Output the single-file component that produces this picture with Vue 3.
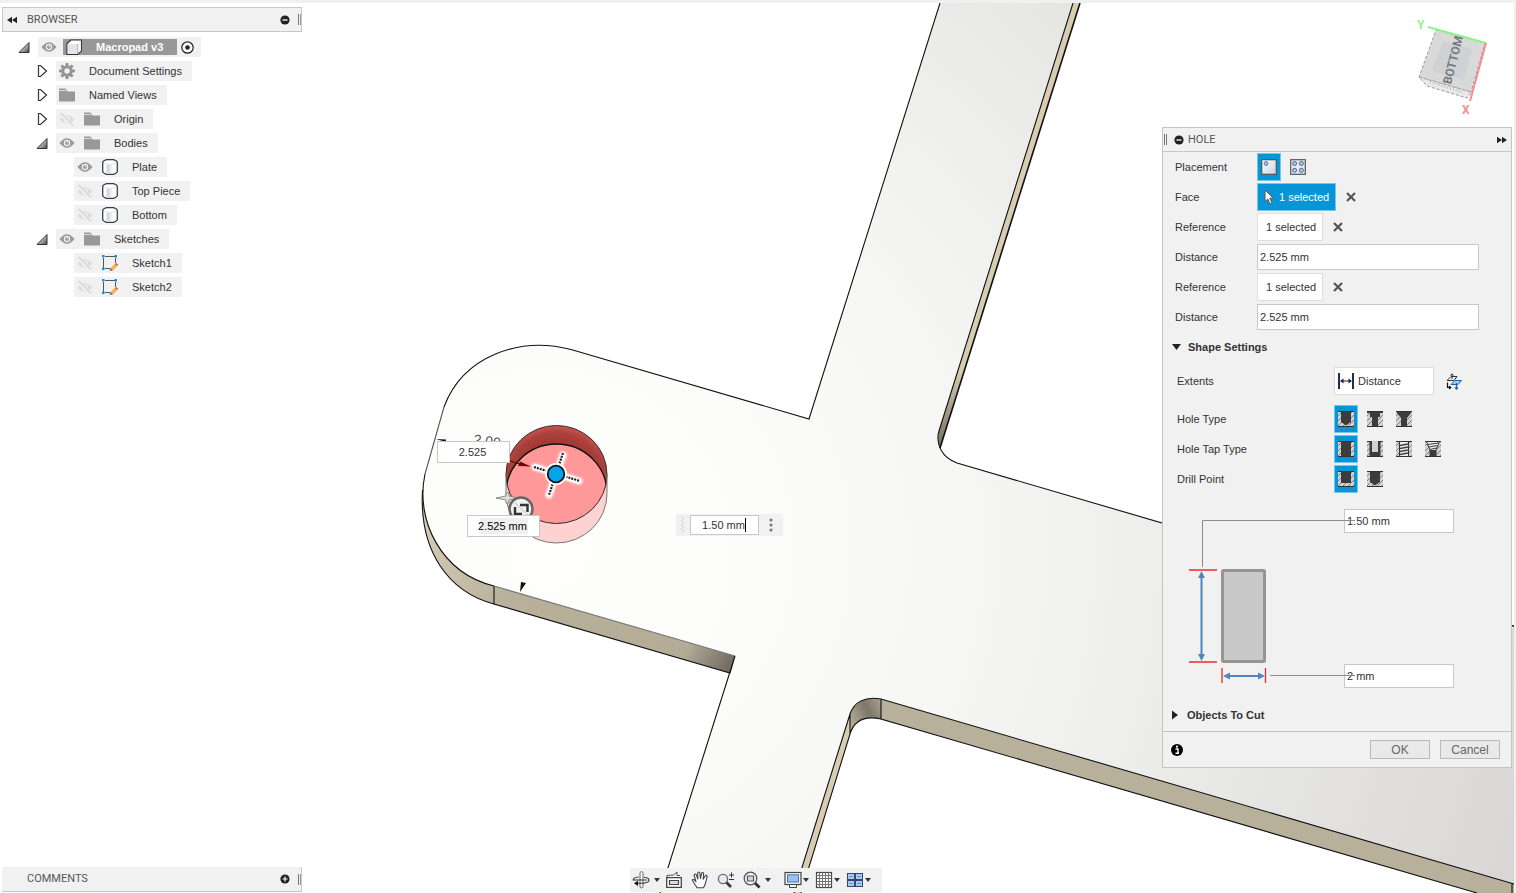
<script setup>
import { ref } from 'vue'

const tree = [
  { label: 'Macropad v3', level: 0, open: true, eye: 'on', icon: 'cube', root: true },
  { label: 'Document Settings', level: 1, open: false, eye: '', icon: 'gear' },
  { label: 'Named Views', level: 1, open: false, eye: '', icon: 'folder' },
  { label: 'Origin', level: 1, open: false, eye: 'off', icon: 'folder' },
  { label: 'Bodies', level: 1, open: true, eye: 'on', icon: 'folder' },
  { label: 'Plate', level: 2, eye: 'on', icon: 'body' },
  { label: 'Top Piece', level: 2, eye: 'off', icon: 'body' },
  { label: 'Bottom', level: 2, eye: 'off', icon: 'body' },
  { label: 'Sketches', level: 1, open: true, eye: 'on', icon: 'folder' },
  { label: 'Sketch1', level: 2, eye: 'off', icon: 'sketch' },
  { label: 'Sketch2', level: 2, eye: 'off', icon: 'sketch' }
]

const placement = ref('single')
const placements = ['single', 'multiple']

const shapeRows = ref([
  { label: 'Hole Type', value: 'simple', options: ['simple', 'counterbore', 'countersink'] },
  { label: 'Hole Tap Type', value: 'plain', options: ['plain', 'clearance', 'tapped', 'taper'] },
  { label: 'Drill Point', value: 'flat', options: ['flat', 'angle'] }
])

const navTools = [
  { icon: 'orbit', label: 'Orbit', menu: true, first: true },
  { icon: 'lookat', label: 'Look At' },
  { icon: 'hand', label: 'Pan' },
  { icon: 'zoom', label: 'Zoom' },
  { icon: 'fit', label: 'Fit', menu: true, last: true },
  { icon: 'display', label: 'Display Settings', menu: true, tight: true },
  { icon: 'grid', label: 'Grid and Snaps', menu: true, tight: true },
  { icon: 'views', label: 'Viewports', menu: true, tight: true }
]

const distanceA = ref('2.525 mm')
const distanceB = ref('2.525 mm')
const depth = ref('1.50 mm')
const diameter = ref('2 mm')
const extents = ref('Distance')
const offsetX = ref('2.525')
const offsetY = ref('2.525 mm')
</script>

<template>
  <div class="app">
    <svg class="defs" width="0" height="0" aria-hidden="true">
      <defs>
        <linearGradient id="gTri" x1="0" y1="0" x2="1" y2="1"><stop offset="0.2" stop-color="#fff" /><stop offset="1" stop-color="#444" /></linearGradient>
        <linearGradient id="gBody" x1="0" x2="1"><stop offset="0" stop-color="#c9ccd2" /><stop offset="1" stop-color="#fff" /></linearGradient>
        <linearGradient id="gPlate" x1="0" y1="0" x2="1" y2="1"><stop offset="0" stop-color="#fff" /><stop offset="1" stop-color="#cfd3da" /></linearGradient>
        <pattern id="hatch" width="5" height="5" patternUnits="userSpaceOnUse">
          <rect width="5" height="5" fill="#d2d2d2" />
          <path d="M-1 6L6 -1M-1 1L1 -1M4 6L6 4" stroke="#777" stroke-width="0.9" />
        </pattern>
      </defs>
      <symbol id="eye-on" viewBox="0 0 16 16">
        <path d="M0.5 8Q8 -1.5 15.5 8Q8 17.500 0.5 8Z" fill="#999" />
        <circle cx="8" cy="8" r="3.200" fill="#f1f1f1" /><circle cx="8" cy="8" r="2" fill="#999" /><circle cx="8.500" cy="7.300" r="0.800" fill="#f1f1f1" />
      </symbol>
      <symbol id="eye-off" viewBox="0 0 16 16">
        <path d="M0.500 8.500Q8 0 15.500 8.500Q8 16.500 0.500 8.500Z" fill="#dcdcdc" />
        <circle cx="8" cy="8.500" r="3" fill="#f1f1f1" /><circle cx="8" cy="8.500" r="1.800" fill="#dcdcdc" />
        <path d="M1.500 2.500L13.500 15" stroke="#f1f1f1" stroke-width="3.600" /><path d="M2 2L14 14.500" stroke="#d6d6d6" stroke-width="1.600" />
      </symbol>
      <symbol id="cube" viewBox="0 0 16 16">
        <path d="M1 4.500L5 1H15.500V11.500L11.500 15.500H1Z" fill="#fff" stroke="#333" stroke-width="1.200" stroke-linejoin="round" />
        <path d="M1.600 5H11V15H1.600Z" fill="#e3e5ea" /><path d="M11.500 5L15 1.500V11.300L11.500 15Z" fill="#f1f2f5" /><path d="M11.500 5V15" stroke="#b5b8bf" />
      </symbol>
      <symbol id="gear" viewBox="0 0 16 16">
        <g fill="#949494"><circle cx="8" cy="8" r="5.600" /><path d="M6.700 0H9.300L9.800 3.500H6.200ZM6.700 16H9.300L9.800 12.500H6.200ZM0 6.700V9.300L3.500 9.800V6.200ZM16 6.700V9.300L12.500 9.800V6.200ZM1.400 3.300L3.300 1.400L6 3.600L3.600 6ZM14.600 3.300L12.700 1.400L10 3.600L12.400 6ZM1.400 12.700L3.300 14.600L6 12.400L3.600 10ZM14.600 12.700L12.700 14.600L10 12.400L12.400 10Z" /></g>
        <circle cx="8" cy="8" r="2.700" fill="#f1f1f1" />
      </symbol>
      <symbol id="folder" viewBox="0 0 16 16">
        <path d="M0 1.500H6.500L8.500 4.500H16V14.500H0Z" fill="#989898" /><path d="M0 3.500H7" stroke="#dadada" />
      </symbol>
      <symbol id="body" viewBox="0 0 16 16">
        <path d="M0.700 3.500Q1 1.800 4.500 0.700H11.500Q15 1.800 15.300 3.500V12.500Q15 14.200 11.500 15.300H4.500Q1 14.200 0.700 12.500Z" fill="#fff" stroke="#3a3f50" stroke-width="1.300" />
        <path d="M4.500 5.500H11.500V13.800H4.500Z" fill="url(#gBody)" /><path d="M2 4.500Q8 6.500 14 4.500" stroke="#e4e4e8" fill="none" />
      </symbol>
      <symbol id="sketch" viewBox="0 0 16 16">
        <path d="M3 1.500H13M1.500 3V13M13.500 3V8M3 13.500H8" stroke="#555" fill="none" />
        <path d="M0 0H2.500V2.500H0ZM12.500 0H15V2.500H12.500ZM0 12.500H2.500V15H0Z" fill="#1292dd" />
        <path d="M8.500 13L13 8.500L15.500 11L11 15.500Z" fill="#f5b64a" /><path d="M13 9L14.500 8L16 9.500L15 11Z" fill="#f0484d" /><path d="M8.500 12.800L11 15.500L7.500 16Z" fill="#777" />
      </symbol>
      <symbol id="minus" viewBox="0 0 10 10"><circle cx="5" cy="5" r="4.600" fill="#222" /><path d="M2.500 5H7.500" stroke="#fff" stroke-width="1.300" /></symbol>
      <symbol id="plus" viewBox="0 0 10 10"><circle cx="5" cy="5" r="4.600" fill="#222" /><path d="M2.500 5H7.500M5 2.500V7.500" stroke="#fff" stroke-width="1.200" /></symbol>
      <symbol id="rewind" viewBox="0 0 10 8"><path d="M5 0.800V7.200L0 4ZM10 0.800V7.200L5 4Z" fill="#222" /></symbol>
      <symbol id="forward" viewBox="0 0 10 8"><path d="M0 0.800V7.200L5 4ZM5 0.800V7.200L10 4Z" fill="#222" /></symbol>
      <symbol id="cross" viewBox="0 0 10 10"><path d="M1 1L9 9M9 1L1 9" stroke="#555" stroke-width="2.200" /></symbol>
      <symbol id="single" viewBox="0 0 16 16"><rect x="0.700" y="0.700" width="14.600" height="14.600" fill="url(#gPlate)" stroke="#555" stroke-width="1.200" /><circle cx="5" cy="4.500" r="1.900" fill="#a9c8ea" stroke="#48698f" stroke-width="0.900" /></symbol>
      <symbol id="multiple" viewBox="0 0 16 16"><rect x="0.700" y="0.700" width="14.600" height="14.600" fill="#e8eaee" stroke="#555" stroke-width="1.200" /><g fill="#a9c8ea" stroke="#48698f"><circle cx="4.600" cy="4.500" r="2" /><circle cx="11.400" cy="4.500" r="2" /><circle cx="4.600" cy="11.300" r="2" /><circle cx="11.400" cy="11.300" r="2" /></g></symbol>
      <symbol id="simple" viewBox="0 0 16 16"><rect width="16" height="16" fill="url(#hatch)" /><path d="M3 0H13V11L8 14.500L3 11Z" fill="#3c3c3c" /><path d="M0 0.500H16M0 15.500H16" stroke="#333" /></symbol>
      <symbol id="counterbore" viewBox="0 0 16 16"><rect width="16" height="16" fill="url(#hatch)" /><path d="M0 0H16V2H13V6H11V16H5V6H3V2H0Z" fill="#3c3c3c" /><path d="M0 0.500H16M0 15.500H16" stroke="#333" /></symbol>
      <symbol id="countersink" viewBox="0 0 16 16"><rect width="16" height="16" fill="url(#hatch)" /><path d="M0 0H16L15 2L11 7V16H5V7L1 2Z" fill="#3c3c3c" /><path d="M0 0.500H16M0 15.500H16" stroke="#333" /></symbol>
      <symbol id="plain" viewBox="0 0 16 16"><rect width="16" height="16" fill="url(#hatch)" /><path d="M3 0H13V16H3Z" fill="#3c3c3c" /><path d="M0 0.500H16M0 15.500H16" stroke="#333" /></symbol>
      <symbol id="clearance" viewBox="0 0 16 16"><rect width="16" height="16" fill="url(#hatch)" /><path d="M2.500 0H13.500V16H2.500Z" fill="#3c3c3c" /><path d="M5 0H11V11H5Z" fill="#d0d0d0" /><path d="M0 15.500H16M0 0.500H4M12 0.500H16" stroke="#333" /></symbol>
      <symbol id="tapped" viewBox="0 0 16 16"><rect width="16" height="16" fill="url(#hatch)" /><path d="M3.500 0H12.500V16H3.500Z" fill="#eee" stroke="#333" /><path d="M4 4.500L12 3M4 7.500L12 6M4 10.500L12 9M4 13.500L12 12" stroke="#444" stroke-width="1.300" /><path d="M0 0.500H16M0 15.500H16" stroke="#333" /></symbol>
      <symbol id="taper" viewBox="0 0 16 16"><rect width="16" height="16" fill="url(#hatch)" /><path d="M1.500 0.500H14.500L11 9V15.500H5V9Z" fill="#eee" stroke="#333" /><path d="M5 9H11V16H5Z" fill="#3c3c3c" /><path d="M3 3.500L13.500 2M4 6L12.500 4.500M5 8.500L11.500 7" stroke="#444" stroke-width="1.200" /><path d="M0 0.500H16M0 15.500H16" stroke="#333" /></symbol>
      <symbol id="flat" viewBox="0 0 16 16"><rect width="16" height="16" fill="url(#hatch)" /><path d="M3 0H13V12H3Z" fill="#3c3c3c" /><path d="M0 0.500H4M12 0.500H16M0 15.500H16" stroke="#333" /></symbol>
      <symbol id="angle" viewBox="0 0 16 16"><rect width="16" height="16" fill="url(#hatch)" /><path d="M3 0H13V11L8 14.500L3 11Z" fill="#3c3c3c" /><path d="M0 0.500H16M0 15.500H16" stroke="#333" /></symbol>
      <symbol id="orbit" viewBox="0 0 18 18"><path d="M8 1.500L9.500 0.500L11 1.500V16L9.500 17L8 16Z" fill="#fff" stroke="#555" stroke-width="0.900" /><path d="M6.500 6C3 6.300 1.200 7.500 1.200 9H15M12 6.200C15 6.500 17 7.500 17 9C17 11 13 12.200 9 12.200H5" stroke="#333" stroke-width="1.100" fill="none" /><path d="M2 12.300L6 9.800V15Z" fill="#111" /></symbol>
      <symbol id="lookat" viewBox="0 0 18 18"><path d="M2 6V4.500L8.500 4L12 1V4.500H15" stroke="#555" fill="none" /><path d="M1.700 6.700H16.300V16.300H1.700Z" fill="#fff" stroke="#444" stroke-width="1.300" /><path d="M4.500 9.500H13.500V13.500H4.500Z" fill="#d9dde2" stroke="#444" stroke-width="1.200" /></symbol>
      <symbol id="hand" viewBox="0 0 18 18"><path d="M6 16.800C5 14 2 11.500 1.300 9.200C1.500 8 3 8.300 5 10.700L3.200 4.500C3 2.800 5 2.500 5.500 4.200L6.800 8L6.700 2.300C6.800 0.600 8.700 0.600 8.900 2.300L9.400 7.500L10.600 2.500C11 1 12.800 1.400 12.600 3L12.200 8.200L14.200 5C15 3.700 16.700 4.500 16.100 6C15 9 15 13 12.500 16.800Z" fill="#fff" stroke="#444" stroke-width="1.100" stroke-linejoin="round" /></symbol>
      <symbol id="zoom" viewBox="0 0 18 18"><circle cx="6" cy="8" r="4.600" fill="#e4edee" stroke="#667" stroke-width="1.300" /><path d="M9.500 11.500L14 16" stroke="#334" stroke-width="2.600" /><path d="M12 4H17M14.500 1.500V6.500M12 8.500H17" stroke="#333" /></symbol>
      <symbol id="fit" viewBox="0 0 18 18"><circle cx="7.500" cy="7.500" r="6.300" fill="#edf2f2" stroke="#555" stroke-width="1.300" /><path d="M4.500 5H10.500V10H4.500Z" fill="#cfd9dc" stroke="#555" stroke-width="1.200" /><path d="M12 12L16.500 16.500" stroke="#333" stroke-width="2.800" /></symbol>
      <symbol id="display" viewBox="0 0 18 18"><rect x="1" y="1.500" width="16" height="12" fill="#f4f6f8" stroke="#444" stroke-width="1.200" /><rect x="3.500" y="3.800" width="11" height="7.200" fill="#9cc0ea" stroke="#4a76ad" /><path d="M5.500 14V16.500H12.500V14" fill="#fff" stroke="#444" /></symbol>
      <symbol id="grid" viewBox="0 0 18 18"><rect x="1.500" y="1.500" width="15" height="15" fill="#fff" stroke="#444" stroke-width="1.200" /><path d="M4.500 1V17M7.500 1V17M10.500 1V17M13.500 1V17M1 4.500H17M1 7.500H17M1 10.500H17M1 13.500H17" stroke="#666" stroke-width="0.900" /></symbol>
      <symbol id="views" viewBox="0 0 18 18"><g fill="#aac9ef" stroke="#2e4a73"><rect x="1.500" y="2.500" width="7" height="6" /><rect x="9.500" y="2.500" width="7" height="6" /><rect x="1.500" y="9.500" width="7" height="6" /><rect x="9.500" y="9.500" width="7" height="6" /></g><path d="M3.500 5.500H6.500M11.500 5.500H14.500M3.500 12.500H6.500M11.500 12.500H14.500" stroke="#5f8cc8" /></symbol>
    </svg>

    <svg class="scene" viewBox="0 0 1516 893" preserveAspectRatio="xMinYMin slice" role="img" aria-label="Macropad plate model">
      <defs>
        <radialGradient id="face" gradientUnits="userSpaceOnUse" cx="550" cy="550" r="1050">
          <stop offset="0" stop-color="#fefefd" /><stop offset="0.180" stop-color="#fcfcfb" /><stop offset="0.400" stop-color="#f6f6f5" /><stop offset="0.620" stop-color="#ebebea" /><stop offset="1" stop-color="#d6d5d3" />
        </radialGradient>
        <linearGradient id="edge" gradientUnits="userSpaceOnUse" x1="422" y1="500" x2="735" y2="670">
          <stop offset="0" stop-color="#d8d0bb" /><stop offset="0.350" stop-color="#b9b09c" /><stop offset="0.850" stop-color="#b5ac98" /><stop offset="1" stop-color="#69645a" />
        </linearGradient>
        <linearGradient id="arm" gradientUnits="userSpaceOnUse" x1="0" y1="370" x2="0" y2="448"><stop offset="0" stop-color="#d8ccb3" /><stop offset="1" stop-color="#756d60" /></linearGradient>
        <linearGradient id="fillet" gradientUnits="userSpaceOnUse" x1="850" y1="725" x2="890" y2="705"><stop offset="0" stop-color="#b9b09d" /><stop offset="0.500" stop-color="#7d766a" /><stop offset="1" stop-color="#b9b09c" /></linearGradient>
        <radialGradient id="wall" gradientUnits="userSpaceOnUse" cx="556" cy="485" r="62"><stop offset="0.600" stop-color="#993530" /><stop offset="0.850" stop-color="#ad413c" /><stop offset="1" stop-color="#d55f5a" /></radialGradient>
        <clipPath id="rim"><ellipse cx="556.500" cy="474.500" rx="50.500" ry="49" /></clipPath>
        <filter id="soft" x="-30%" y="-30%" width="160%" height="160%"><feGaussianBlur stdDeviation="1.200" /></filter>
      </defs>
      <rect width="1516" height="893" fill="#fff" />
      <path fill="url(#face)" d="M940 3L809 419L571 349.500C520 336 463 356 444 407L425 474C415 520 441 573 494 586L735 656L660 893H795L850 714C854 702 865 696 881 699L1514 884V626L955 462C941 456 936 444 939 431L1073 3Z" />
      <path fill="url(#edge)" d="M422.500 490C424 538 452 576 494 586L735 656L730 673L494 604C449 592 419 552 422.500 490Z" />
      <path fill="#b9b09c" d="M881 699L1514 884V893H1477L881 719Z" />
      <path fill="url(#fillet)" d="M850 714C854 702 865 696 881 699V719C863 715 854 721 850 734Z" />
      <path fill="#d8ccb3" d="M850 714V734L801 893H794Z" />
      <path fill="url(#arm)" d="M1073 3H1080L940 448Q937 438 939 431Z" />
      <g fill="none" stroke="#111" stroke-width="1.100">
        <path d="M940 3L809 419L571 349.500C520 336 463 356 444 407" />
        <path d="M444 407L425 474" stroke="#555" />
        <path d="M425 474C415 520 441 573 494 586" />
        <path d="M494 586L735 656" stroke="#777" />
        <path d="M735 656L660 893M735 656L730 673L494 604V586M494 604C449 592 419 552 422.500 490" />
        <path d="M794 893L850 714C854 702 865 696 881 699L1514 884M1477 893L881 719V699M881 719C863 715 854 721 850 734V714M850 734L801 893M1512 884V893" />
        <path d="M1073 3L939 431Q936 440 941 450Q946 459 957 463L1514 626" />
        <path d="M1080 3L940 448" stroke-width="1.600" />
      </g>
      <text x="473" y="444" class="dim" transform="rotate(8 473 444)">2.00</text>
      <ellipse cx="556.500" cy="493.500" rx="50.500" ry="49.500" fill="#ffd2d2" />
      <path d="M506 474H607V494H506Z" fill="#ffd2d2" />
      <ellipse cx="556.500" cy="474.500" rx="50.500" ry="49" fill="url(#wall)" />
      <ellipse cx="556.500" cy="493.500" rx="50.500" ry="49.500" fill="#f99" clip-path="url(#rim)" />
      <g fill="none" stroke="#333">
        <ellipse cx="556.500" cy="474.500" rx="50.500" ry="49" />
        <path d="M506 474V493.500A50.500 49.500 0 0 0 607 493.500V474" stroke="#777" />
        <ellipse cx="556.500" cy="493.500" rx="50.500" ry="49.500" stroke="#111" stroke-width="1.400" clip-path="url(#rim)" />
      </g>
      <path d="M510 461L521 464.500" stroke="#600" stroke-width="1.200" /><path d="M520 461.500L531 466.500L518 466Z" fill="#700" />
      <g stroke="#fff" stroke-linecap="round" filter="url(#soft)"><path d="M563 455L549 495M535 467L579 481" stroke-width="7" /></g>
      <g stroke="#fff" stroke-linecap="round"><path d="M563 455L549 494M535 467L578 481" stroke-width="5" /></g>
      <path d="M563 453L549 495M534 467L580 481" stroke="#222" stroke-width="2.200" stroke-dasharray="2 1" />
      <circle cx="556" cy="474" r="11" fill="#fff" /><circle cx="556" cy="474" r="8.300" fill="#00a5ee" stroke="#111" stroke-width="1.800" />
      <path d="M436 439L446 439.500L446 442Z" fill="#111" />
      <path d="M521 582L526 583L520 592Z" fill="#111" />
      <path d="M496 498L506 496V493H509V496L518 498L509 500V503H506V500Z" fill="#ddd" stroke="#777" stroke-width="0.800" />
      <circle cx="521" cy="509" r="11.500" fill="#f0f0f0" stroke="#666" stroke-width="2.400" />
      <path d="M520 505H527.500V512M515 507V514H522" fill="none" stroke="#333" stroke-width="2.400" /><path d="M515 503L528 515" stroke="#bbb" />
      <path d="M1512 625.500L1514 626.500" stroke="#111" />
    </svg>

    <input v-model="offsetX" class="canvas-input offset-x" aria-label="Offset from first edge" />
    <input v-model="offsetY" class="canvas-input offset-y" aria-label="Offset from second edge" />
    <div class="depth-box">
      <svg width="6" height="18" aria-hidden="true"><path d="M1 1L4 3L1 5L4 7L1 9L4 11L1 13L4 15L1 17" fill="none" stroke="#c0c0c0" stroke-dasharray="1 1" /></svg>
      <input v-model="depth" class="canvas-input" aria-label="Hole depth" /><span class="caret"></span>
      <button class="plain-btn" aria-label="More options"><svg width="4" height="14"><circle cx="2" cy="2" r="1.500" fill="#777" /><circle cx="2" cy="7" r="1.500" fill="#777" /><circle cx="2" cy="12" r="1.500" fill="#777" /></svg></button>
    </div>

    <aside class="left">
      <header class="bar">
        <button class="plain-btn" aria-label="Collapse"><svg width="10" height="8"><use href="#rewind" /></svg></button>
        <h2>BROWSER</h2>
        <button class="plain-btn" aria-label="Minimize"><svg width="10" height="10"><use href="#minus" /></svg></button>
        <i class="grip"></i>
      </header>
      <ul class="tree">
        <li v-for="n in tree" :key="n.label" :class="'level' + n.level">
          <button v-if="n.open !== undefined" class="plain-btn twist" :aria-label="'Toggle ' + n.label">
            <svg width="12" height="14">
              <path v-if="n.open" d="M1 12.500H11V2.500Z" fill="url(#gTri)" stroke="#333" />
              <path v-else d="M2.500 1.500H4.500L10.500 7L4.500 12.500H2.500Z" fill="#fff" stroke="#333" stroke-width="1.200" />
            </svg>
          </button>
          <div class="node">
            <svg v-if="n.eye" class="eye" width="16" height="16"><use :href="'#eye-' + n.eye" /></svg>
            <span class="name" :class="{ root: n.root }"><svg width="16" height="16"><use :href="'#' + n.icon" /></svg><span>{{ n.label }}</span></span>
            <svg v-if="n.root" class="active" width="13" height="13"><circle cx="6.500" cy="6.500" r="5.700" fill="#fff" stroke="#222" stroke-width="1.200" /><circle cx="6.500" cy="6.500" r="2.300" fill="#222" /></svg>
          </div>
        </li>
      </ul>
      <footer class="bar comments">
        <h2>COMMENTS</h2>
        <button class="plain-btn" aria-label="Expand comments"><svg width="10" height="10"><use href="#plus" /></svg></button>
        <i class="grip"></i>
      </footer>
    </aside>

    <nav class="tools" aria-label="Navigation">
      <button v-for="t in navTools" :key="t.icon" class="plain-btn" :class="{ first: t.first, tight: t.tight, last: t.last }" :aria-label="t.label">
        <svg width="18" height="18"><use :href="'#' + t.icon" /></svg>
        <svg v-if="t.menu" class="drop" width="6" height="4"><path d="M0 0H6L3 4Z" fill="#333" /></svg>
      </button>
    </nav>

    <section class="right">
      <svg class="viewcube" width="100" height="110" viewBox="1412 10 100 110" role="img" aria-label="View cube">
        <path d="M1436 30L1485 43L1471 92L1419 77Z" fill="#d9d9da" stroke="#999" stroke-dasharray="3 2" />
        <path d="M1443 41L1472 49L1464 80L1432 71Z" fill="#cfd2d5" />
        <path d="M1419 77L1471 92L1467 98L1427 86Z" fill="#e8e8e8" stroke="#999" stroke-dasharray="3 2" />
        <path d="M1430 82L1462 92" stroke="#bbb" stroke-width="2" stroke-dasharray="1 2" />
        <path d="M1428 27L1486 43" stroke="#8df38d" stroke-width="2" /><path d="M1486 43L1470 101" stroke="#f98d8d" stroke-width="2" />
        <text class="cube-face" x="1457" y="61" transform="rotate(-76 1457 61)" text-anchor="middle">BOTTOM</text>
        <text class="axis-y" x="1417" y="29">Y</text><text class="axis-x" x="1462" y="114">X</text>
      </svg>

      <form class="panel" @submit.prevent>
        <header class="bar">
          <i class="grip"></i>
          <button type="button" class="plain-btn" aria-label="Minimize"><svg width="10" height="10"><use href="#minus" /></svg></button>
          <h2>HOLE</h2>
          <button type="button" class="plain-btn" aria-label="Dock"><svg width="10" height="8"><use href="#forward" /></svg></button>
        </header>

        <div class="fields">
          <div class="row">
            <span class="lab">Placement</span>
            <div class="toggles">
              <button v-for="p in placements" :key="p" type="button" class="toggle" :class="{ on: placement === p }" :aria-label="p" @click="placement = p"><svg width="16" height="16"><use :href="'#' + p" /></svg></button>
            </div>
          </div>
          <div class="row">
            <span class="lab">Face</span>
            <button type="button" class="pick on"><svg width="11" height="16"><path d="M1 1V12.500L3.800 10L6 15L8 14L5.800 9.200H9.500Z" fill="#fff" stroke="#555" /></svg>1 selected</button>
            <button type="button" class="plain-btn clear" aria-label="Clear face"><svg width="10" height="10"><use href="#cross" /></svg></button>
          </div>
          <template v-for="k in 2" :key="k">
            <div class="row">
              <span class="lab">Reference</span>
              <button type="button" class="pick">1 selected</button>
              <button type="button" class="plain-btn clear" aria-label="Clear reference"><svg width="10" height="10"><use href="#cross" /></svg></button>
            </div>
            <div class="row">
              <label class="lab" :for="'distance' + k">Distance</label>
              <input v-if="k === 1" id="distance1" v-model="distanceA" class="text wide" />
              <input v-else id="distance2" v-model="distanceB" class="text wide" />
            </div>
          </template>
        </div>

        <button type="button" class="plain-btn section"><svg width="10" height="8"><path d="M0 1H9L4.500 7Z" fill="#222" /></svg>Shape Settings</button>

        <div class="shape">
          <div class="row extents">
            <label class="lab" for="extents">Extents</label>
            <div class="select">
              <svg width="16" height="16"><path d="M1 0V16M15 0V16" stroke="#1b2f57" stroke-width="2" /><path d="M3 8H13" stroke="#222" /><path d="M2 8L5.500 5.500V10.500ZM14 8L10.500 5.500V10.500Z" fill="#222" /></svg>
              <select id="extents" v-model="extents"><option>Distance</option><option>To</option><option>All</option></select>
            </div>
            <button type="button" class="plain-btn flip" aria-label="Flip direction"><svg width="17" height="17"><path d="M1 7.500L5 3.500H11L8 7.500ZM6 6V1M4.500 2.500L6 0.800L7.500 2.500" fill="none" stroke="#333" /><path d="M5 11.500L9 7.500H15.500L12 11.500Z" fill="#9ed0f2" stroke="#1c64b0" /><path d="M10.500 10V16M9 14.500L10.500 16L12 14.500" fill="none" stroke="#1c64b0" stroke-width="1.300" /><path d="M1.500 9.500V14.500H4M3 13L4.800 14.500L3 16" fill="none" stroke="#111" stroke-width="1.200" /></svg></button>
          </div>
          <div v-for="r in shapeRows" :key="r.label" class="row">
            <span class="lab">{{ r.label }}</span>
            <div class="toggles">
              <button v-for="o in r.options" :key="o" type="button" class="toggle" :class="{ on: r.value === o }" :aria-label="o" @click="r.value = o"><svg width="16" height="16"><use :href="'#' + o" /></svg></button>
            </div>
          </div>
        </div>

        <div class="diagram">
          <svg width="156" height="179" aria-hidden="true">
            <path d="M14.500 58V11.500H167M82 166.500H167" fill="none" stroke="#8a8a8a" />
            <path d="M1 61H29M1 153H29M34 159V174M77.500 159V174" stroke="#ec2c2c" stroke-width="1.300" />
            <rect x="34.500" y="61.500" width="42" height="91" rx="1" fill="#c8c8c8" stroke="#959595" stroke-width="3" />
            <path d="M13.500 66V148M38 167H73" stroke="#4d86bd" stroke-width="2" />
            <path d="M13.500 62L17 69H10ZM13.500 152L17 145H10ZM35 167L42 163.500V170.500ZM77 167L70 163.500V170.500Z" fill="#4d86bd" />
          </svg>
          <div class="sizes">
            <input v-model="depth" class="text" aria-label="Depth" />
            <input v-model="diameter" class="text" aria-label="Diameter" />
          </div>
        </div>

        <button type="button" class="plain-btn section cut"><svg width="10" height="10"><path d="M1 0.500V9.500L7 5Z" fill="#222" /></svg>Objects To Cut</button>

        <footer class="actions">
          <button type="button" class="plain-btn info" aria-label="Information"><svg width="12" height="12"><circle cx="6" cy="6" r="6" fill="#000" /><path d="M4.500 5H7V9M4.500 9.200H8" stroke="#fff" stroke-width="1.400" fill="none" /><circle cx="6" cy="2.700" r="1.100" fill="#fff" /></svg></button>
          <button type="submit" class="push">OK</button>
          <button type="button" class="push">Cancel</button>
        </footer>
      </form>
    </section>
  </div>
</template>

<style>
body { margin: 0; }
</style>

<style scoped>
* { box-sizing: border-box; }
.app {
  position: relative;
  display: grid;
  grid-template-columns: 302px 1fr 350px;
  min-height: 100vh;
  padding-right: 4px;
  overflow: hidden;
  background: #fff;
  border-top: 3px solid #f0f0f0;
  font: 11px/16px "Liberation Sans", Arial, sans-serif;
  color: #333;
}
.app::before { content: ""; position: absolute; z-index: 1; left: 0; right: 0; top: -1px; height: 1px; background: #d9d9d9; }
.app::after { content: ""; position: absolute; right: 0; top: 0; bottom: 0; width: 2px; background: #efefef; }
.defs { position: absolute; }
.scene { position: absolute; left: 0; top: -3px; width: 100%; height: 100vh; }
svg { display: block; flex: none; }
input, button, select { font: inherit; color: inherit; border-radius: 0; }
.plain-btn { display: flex; align-items: center; padding: 0; border: 0; background: none; }
.dim { font-size: 14px; fill: #555; }

.canvas-input {
  width: 73px; height: 22px; padding: 0 2px 0 0;
  border: 1px solid #c8c8c8; background: #fff;
  text-align: center; outline: 0;
}
.offset-x { position: absolute; left: 437px; top: 438px; }
.offset-y { position: absolute; left: 467px; top: 512px; color: #000; background: linear-gradient(#efefef, #efefef) center / 48px 16px no-repeat #fff; }
.depth-box {
  position: absolute; left: 676px; top: 511px;
  display: flex; align-items: center; width: 107px; height: 22px; padding-left: 4px;
  background: #f1f1f1;
}
.depth-box .canvas-input { width: 69px; height: 20px; margin-left: 4px; }
.depth-box .plain-btn { margin-left: 10px; }
.caret { width: 1px; height: 14px; margin-left: -14px; margin-right: 13px; background: #000; }

.bar { display: flex; align-items: center; height: 25px; background: #f1f1f1; border: 1px solid #c8c8c8; }
.bar h2 { flex: 1; margin: 0; font: 11px/16px Roboto, sans-serif; color: #555; }
.grip { width: 3px; height: 11px; border: solid #777; border-width: 0 1px; }

.left { position: relative; grid-column: 1; grid-row: 1; display: flex; flex-direction: column; padding: 4px 0 1px 2px; }
.left .bar { padding-left: 4px; }
.left .bar h2 { padding-left: 10px; }
.left .grip { margin-left: 8px; border-right: 0; border-left-color: #777; box-shadow: inset -1px 0 #999; }
.left .comments { margin-top: auto; padding-left: 15px; border-width: 0 1px 1px 0; }
.tree { list-style: none; margin: 5px 0 0; padding: 0; display: flex; flex-direction: column; gap: 4px; }
.tree li { display: flex; align-items: center; height: 20px; }
.level0 { padding-left: 16px; }
.level1 { padding-left: 34px; }
.level2 { padding-left: 72px; }
.twist { width: 20px; }
.node { display: flex; align-items: center; height: 20px; padding: 0 10px 0 3px; background: #f1f1f1; }
.level0 .node { padding-right: 7px; }
.eye { margin-right: 9px; }
.level0 .eye { margin-right: 6px; }
.name { display: flex; align-items: center; gap: 14px; }
.root { height: 16px; padding: 0 14px 0 3px; background: #989898; color: #fff; font-weight: bold; }
.active { margin-left: 4px; }

.tools {
  position: relative; grid-column: 1 / -1; grid-row: 1; justify-self: center; align-self: end;
  display: flex; align-items: center; width: 252px; height: 24px; margin-bottom: 1px; padding-left: 2px;
  background: #f1f1f1;
}
.tools .plain-btn { margin-right: 8px; }
.tools .first { margin-right: 5px; }
.tools .drop { margin-left: 4px; }
.tools .tight { margin-right: 6px; }
.tools .tight .drop { margin-left: 1px; }
.tools .last { margin-right: 13px; }

.right { position: relative; grid-column: 3; grid-row: 1; display: flex; flex-direction: column; }
.viewcube { align-self: flex-end; margin-top: 7px; }
.axis-y, .axis-x { font: bold 12px Roboto, sans-serif; }
.axis-y { fill: #8df38d; }
.axis-x { fill: #f98d8d; }
.cube-face { font: bold 12px Roboto, sans-serif; fill: #777b80; }

.panel { margin-top: 7px; background: #f1f1f1; border: 1px solid #c4c4c4; }
.panel .bar { height: 24px; border-width: 0 0 1px; padding: 0 4px 0 1px; }
.panel .bar .plain-btn { margin-left: 7px; }
.panel .bar h2 { padding-left: 4px; }
.row { display: flex; align-items: center; height: 30px; }
.lab { flex: none; width: 82px; }
.fields { padding: 0 32px 0 12px; }
.toggles { display: flex; gap: 5px; }
.toggle { display: flex; align-items: center; justify-content: center; width: 24px; height: 28px; padding: 0; border: 1px solid transparent; background: none; }
.toggle.on { background: #0696d7; border-color: #79c5e8; }
.pick { display: flex; align-items: center; gap: 4px; height: 28px; padding: 0 6px 0 8px; background: #fff; border: 1px solid #dedede; }
.pick.on { padding: 0 6px; color: #fff; background: #0696d7; border-color: #79c5e8; }
.clear { margin-left: 10px; }
.text { width: 110px; height: 24px; padding: 0 2px; background: #fff; border: 1px solid #c8c8c8; outline: 0; }
.text.wide { flex: 1; width: auto; height: 26px; }
.section { height: 30px; gap: 6px; padding-left: 9px; font-weight: bold; }
.shape { padding-left: 14px; }
.shape .lab { width: 157px; }
.extents { height: 38px; margin-bottom: 4px; }
.select { display: flex; align-items: center; width: 100px; height: 28px; padding-left: 3px; background: #fff; border: 1px solid #dedede; }
.select select { flex: 1; min-width: 0; padding: 0 0 0 4px; appearance: none; border: 0; background: none; outline: 0; }
.flip { margin-left: 12px; }
.diagram { display: flex; padding-left: 25px; margin-top: 15px; }
.diagram svg { position: relative; z-index: 1; overflow: visible; pointer-events: none; }
.sizes { display: flex; flex-direction: column; justify-content: space-between; }
.cut { margin-top: 12px; padding-left: 8px; }
.actions { display: flex; align-items: center; gap: 10px; height: 36px; margin-top: 1px; padding: 0 11px 0 8px; border-top: 1px solid #c4c4c4; }
.info { margin-right: auto; }
.push { width: 60px; height: 19px; padding: 0; font-size: 12px; line-height: 16px; color: #666; background: #e9e9e9; border: 1px solid #b9b9b9; }
</style>
